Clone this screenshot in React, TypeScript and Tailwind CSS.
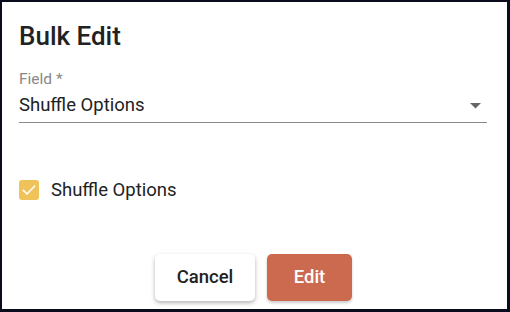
import React from "react";

export default function App() {
  return (
    <div
      className="w-[510px] h-[312px] bg-white border-l-2 border-t-2 border-r-[3px] border-b-[3px] border-[#0b0b1e] flex flex-col"
      style={{ fontFamily: "Roboto, 'Liberation Sans', sans-serif" }}
    >
      <div className="px-[17px] pt-[18px]">
        <div className="text-[26px] leading-[32px] font-medium text-[#222]">Bulk Edit</div>
        <div className="mt-[19px] w-[468px]">
          <div className="text-[15.5px] leading-[16px] text-[#888]">Field *</div>
          <div className="mt-[6px] flex items-center justify-between border-b border-[#8a8a8a] pb-[5px]">
            <span className="text-[18.5px] leading-[24px] text-[#222]">Shuffle Options</span>
            <svg width="11" height="6" viewBox="0 0 11 6" className="mr-[6px] mt-[2px]">
              <path d="M0 0 L11 0 L5.5 5.5 Z" fill="#666" />
            </svg>
          </div>
        </div>
        <div className="mt-[55px] flex items-center h-[24px]">
          <div className="w-[20px] h-[20px] rounded-[3px] bg-[#f0c35a] flex items-center justify-center">
            <svg width="16" height="16" viewBox="0 0 24 24">
              <path d="M3.5 12.5 L9 18 L20.5 6" fill="none" stroke="#fff" strokeWidth="2.4" strokeLinecap="round" strokeLinejoin="round" />
            </svg>
          </div>
          <span className="ml-[12px] text-[18.5px] leading-[24px] text-[#222]">Shuffle Options</span>
        </div>
      </div>
      <div className="mt-[52px] flex justify-center gap-[12px] pr-[2px]">
        <button className="w-[100px] h-[47px] rounded-[5px] bg-white text-[18.5px] font-medium text-[#222] shadow-[0_2px_4px_rgba(0,0,0,0.3)]">
          Cancel
        </button>
        <button className="w-[85px] h-[47px] rounded-[5px] bg-[#cb6a4f] text-[18.5px] font-medium text-white shadow-[0_2px_3px_rgba(0,0,0,0.2)]">
          Edit
        </button>
      </div>
    </div>
  );
}
